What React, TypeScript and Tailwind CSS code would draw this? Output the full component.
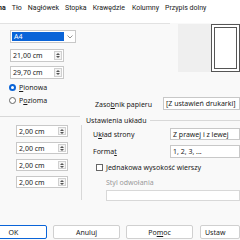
import React from 'react';

function Spin({ value, className = '' }: { value: string; className?: string }) {
  return (
    <div className={`flex h-[12px] items-stretch border border-[#c8c8c8] bg-white ${className}`}>
      <div className="flex flex-1 items-center pl-[2px] text-[7px] leading-none text-[#222]">{value}</div>
      <div className="my-[1px] mr-[1px] flex w-[8px] flex-col items-center justify-center gap-[1px] border border-[#d0d0d0] bg-[#f3f3f3]">
        <span className="h-0 w-0 border-x-[2px] border-b-[2px] border-x-transparent border-b-[#555]" />
        <span className="h-0 w-0 border-x-[2px] border-t-[2px] border-x-transparent border-t-[#555]" />
      </div>
    </div>
  );
}

function Field({ value, className = '' }: { value: string; className?: string }) {
  return (
    <div className={`flex items-center whitespace-nowrap border border-[#c8c8c8] bg-white pl-[2px] text-[7px] leading-none text-[#222] ${className}`}>
      {value}
    </div>
  );
}

export default function App() {
  return (
    <div
      className="flex h-[240px] w-[240px] flex-col overflow-hidden bg-[#f9f9f9] text-[7px] leading-none text-[#1a1a1a]"
      style={{ fontFamily: '"Noto Sans", "Open Sans", sans-serif' }}
    >
      {/* Tabs */}
      <div
        className="flex h-[16px] shrink-0 items-center gap-[6px] whitespace-nowrap bg-white text-[7px]"
        style={{ fontFamily: 'Roboto, "Noto Sans", sans-serif' }}
      >
        <span className="ml-[-15px] font-bold">Strona</span>
        <span>Tło</span>
        <span>Nagłówek</span>
        <span>Stopka</span>
        <span>Krawędzie</span>
        <span className="ml-[1px]">Kolumny</span>
        <span>Przypis dolny</span>
      </div>
      <div className="h-[7px] shrink-0 bg-white" />
      <div className="h-[1px] w-[170px] shrink-0 bg-[#e2e2e2]" />

      {/* Paper format */}
      <div className="flex shrink-0">
        <div className="flex w-[178px] flex-col">
          <div className="ml-[10px] mt-[6px] flex h-[13px] w-[66px] border border-[#c8c8c8] bg-white">
            <div className="m-[1px] flex flex-1 items-center bg-[#0a64d8] pl-[2px] text-white">A4</div>
            <div className="flex w-[10px] items-center justify-center">
              <svg width="6" height="4" viewBox="0 0 6 4" fill="none" stroke="#777" strokeWidth="0.8">
                <polyline points="0.5,0.5 3,3 5.5,0.5" />
              </svg>
            </div>
          </div>
          <Spin value="21,00 cm" className="ml-[10px] mt-[6px] h-[13px] w-[54px]" />
          <Spin value="29,70 cm" className="ml-[10px] mt-[4px] h-[13px] w-[54px]" />
          <div className="ml-[9px] mt-[3px] flex h-[10px] items-center gap-[3px]">
            <span className="h-[7px] w-[7px] rounded-full border-[2px] border-[#0a64d8] bg-white" />
            <span><u>P</u>ionowa</span>
          </div>
        </div>
        <div className="flex h-[48px] flex-1 bg-[#efefef] pl-[33px]">
          <div className="h-[48px] flex-1 border border-[#555] bg-white p-[2px]">
            <div className="h-full w-full border border-[#555]" />
          </div>
        </div>
      </div>
      <div className="mt-[5px] flex h-[13px] shrink-0 items-center">
        <div className="ml-[9px] flex w-[86px] items-center gap-[3px] self-start">
          <span className="h-[7px] w-[7px] rounded-full border border-[#666] bg-white" />
          <span>P<u>o</u>zioma</span>
        </div>
        <span className="mt-[1px]">Zaso<u>b</u>nik papieru</span>
        <Field value="[Z ustawień drukarki]" className="ml-auto h-[13px] w-[77px]" />
      </div>

      {/* Layout settings header */}
      <div className="mt-[6px] flex h-[9px] shrink-0 items-center">
        <div className="h-[1px] w-[80px] self-start bg-[#d8d8d8]" />
        <span className="ml-[6px]">Ustawienia układu</span>
        <div className="ml-[3px] h-[1px] flex-1 bg-[#d8d8d8]" />
      </div>

      {/* Margins + layout */}
      <div className="flex shrink-0">
        <div className="flex h-[75px] w-[82px] flex-col gap-[5px] border-r border-[#d8d8d8] pl-[16px]">
          <Spin value="2,00 cm" className="w-[52px]" />
          <Spin value="2,00 cm" className="w-[52px]" />
          <Spin value="2,00 cm" className="w-[52px]" />
          <Spin value="2,00 cm" className="w-[52px]" />
        </div>
        <div className="flex flex-1 flex-col pl-[11px]">
          <div className="mt-[3px] flex items-center">
            <span className="w-[77px]">U<u>k</u>ład strony</span>
            <Field value="Z prawej i z lewej" className="h-[12px] flex-1" />
          </div>
          <div className="mt-[5px] flex items-center">
            <span className="w-[77px]">Forma<u>t</u></span>
            <Field value="1, 2, 3, ..." className="h-[13px] flex-1" />
          </div>
          <div className="ml-[3px] mt-[5px] flex h-[8px] items-center gap-[3px]">
            <span className="h-[7px] w-[7px] border border-[#666] bg-white" />
            <span><u>J</u>ednakowa wysokość wierszy</span>
          </div>
          <span className="ml-[13px] mt-[8px] text-[#9a9a9a]">Styl odwołania</span>
          <div className="ml-[13px] mt-[4px] h-[11px] border border-[#d8d8d8] bg-white" />
        </div>
      </div>

      {/* Buttons */}
      <div className="mt-auto flex h-[15px] shrink-0 items-start gap-[6px] pb-[1px]">
        <button className="ml-[-20px] h-[14px] w-[73px] rounded-[2px] border border-[#0a64d8] bg-white text-[7px]">OK</button>
        <button className="h-[14px] w-[73px] rounded-[2px] border border-[#d0d0d0] bg-white text-[7px]">Anuluj</button>
        <button className="h-[14px] w-[73px] rounded-[2px] border border-[#d0d0d0] bg-white text-[7px]">Po<u>m</u>oc</button>
        <button className="ml-[1px] h-[14px] w-[40px] shrink-0 rounded-[2px] border border-[#d0d0d0] bg-white pl-[4px] text-left text-[7px]">Ustaw</button>
      </div>
    </div>
  );
}
